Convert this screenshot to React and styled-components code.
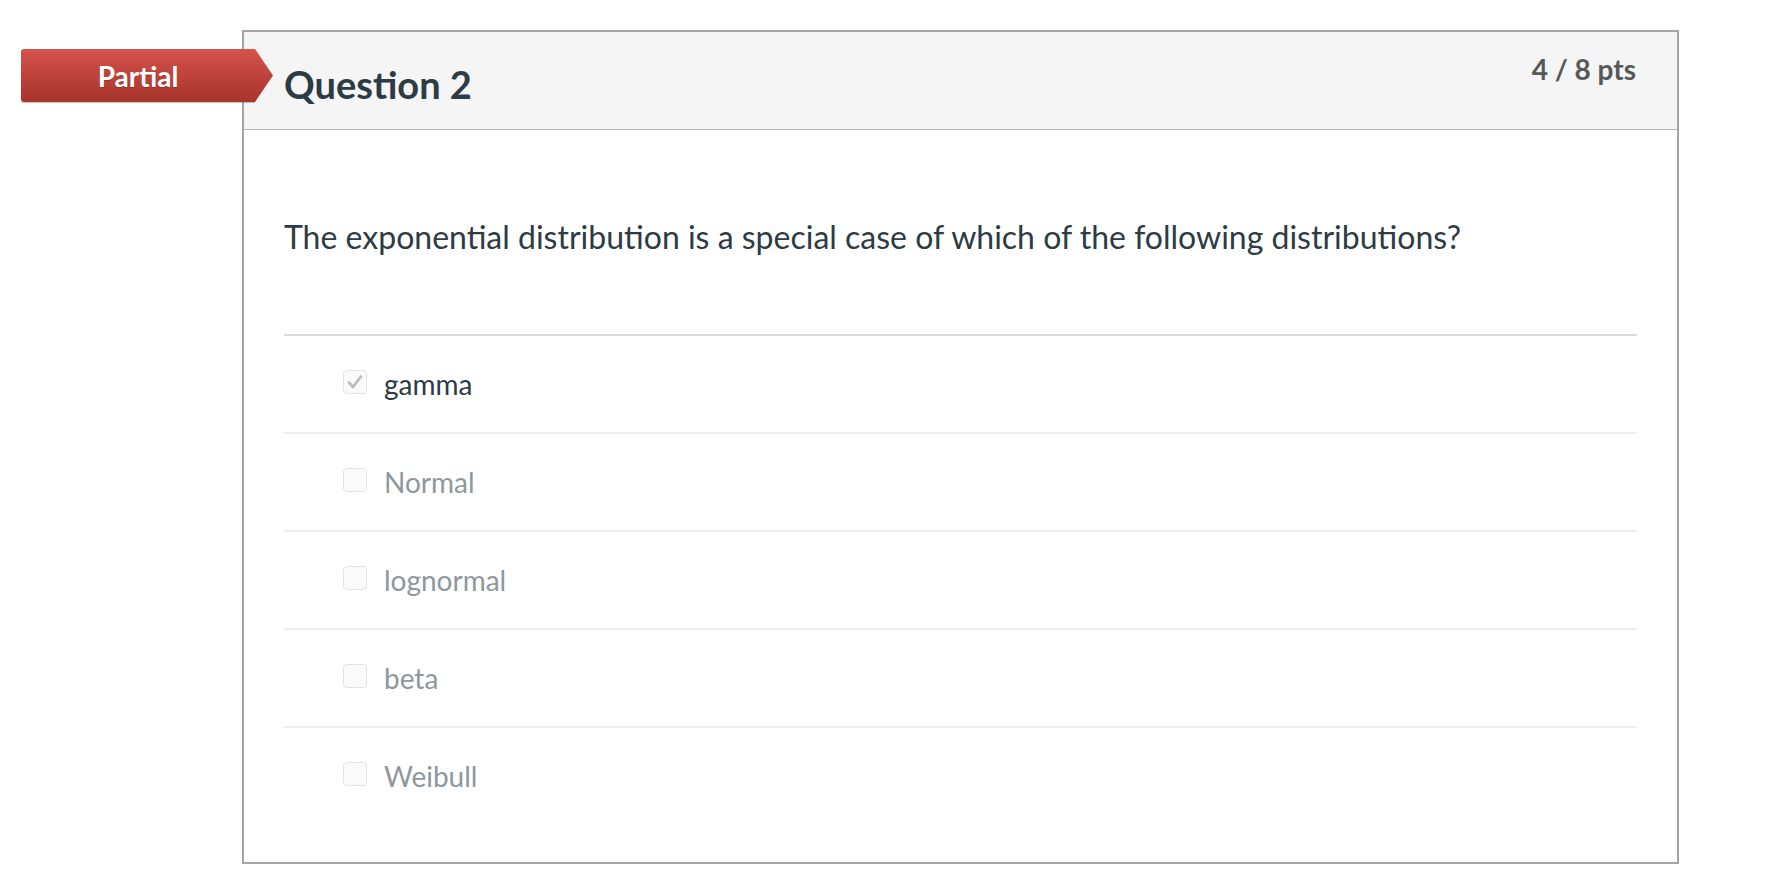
import styled, { createGlobalStyle } from 'styled-components';

const GlobalStyle = createGlobalStyle`
  html, body {
    margin: 0;
    padding: 0;
    background: #ffffff;
    font-family: Lato, "Open Sans", sans-serif;
    color: #2d3b45;
  }
`;

const Page = styled.div`
  padding: 30px 0 0 242px;
`;

const Card = styled.div`
  position: relative;
  width: 1433px;
  border: 2px solid #a5a5a5;
  background: #fff;
`;

const Badge = styled.div`
  position: absolute;
  left: -223px;
  top: 17px;
  width: 234px;
  height: 53px;
  display: flex;
  align-items: center;
  justify-content: center;
  color: #fff;
  font-size: 28px;
  font-weight: 700;
  border-radius: 3px 0 0 3px;
  background: linear-gradient(#d4534b, #a7342b);
  box-shadow: 0 1px 1px rgba(0, 0, 0, 0.25);
  text-shadow: 0 1px 1px rgba(0, 0, 0, 0.2);

  &::after {
    content: '';
    position: absolute;
    right: -18px;
    top: 0;
    width: 18px;
    height: 53px;
    background: linear-gradient(#d4534b, #a7342b);
    clip-path: polygon(0 0, 100% 50%, 0 100%);
  }
`;

const Header = styled.div`
  height: 98px;
  box-sizing: border-box;
  border-bottom: 1px solid #b5b5b5;
  background: #f5f5f5;
  padding: 0 41px 0 40px;
  display: flex;
  justify-content: space-between;
  align-items: flex-start;
`;

const Title = styled.h2`
  margin: 30px 0 0;
  font-size: 38px;
  line-height: 44px;
  font-weight: 700;
  color: #2d3b45;
`;

const Points = styled.div`
  margin-top: 20px;
  font-size: 28px;
  font-weight: 700;
  color: #585858;
`;

const Body = styled.div`
  padding: 0 40px 38px;
`;

const QuestionText = styled.p`
  margin: 0;
  padding: 85px 0 75px;
  font-size: 32px;
  line-height: 44px;
`;

const AnswerRow = styled.div`
  height: 96px;
  display: flex;
  align-items: center;
  padding-left: 59px;
  gap: 17px;
  border-top: 2px solid ${({ $first }) => ($first ? '#dadada' : '#eeeeee')};
  font-size: 28px;
  color: ${({ $selected }) => ($selected ? '#2d3b45' : '#8f979d')};
`;

const Box = styled.span`
  width: 22px;
  height: 22px;
  border: 1px solid #e2e2e2;
  border-radius: 4px;
  background: #fafafa;
  display: flex;
  align-items: center;
  justify-content: center;
  flex: none;
  margin-top: -4px;
`;

const answers = [
  { label: 'gamma', selected: true },
  { label: 'Normal' },
  { label: 'lognormal' },
  { label: 'beta' },
  { label: 'Weibull' },
];

export default function App() {
  return (
    <Page>
      <GlobalStyle />
      <Card>
        <Badge>Partial</Badge>
        <Header>
          <Title>Question 2</Title>
          <Points>4 / 8 pts</Points>
        </Header>
        <Body>
          <QuestionText>
            The exponential distribution is a special case of which of the following distributions?
          </QuestionText>
          {answers.map((a, i) => (
            <AnswerRow key={a.label} $first={i === 0} $selected={a.selected}>
              <Box>
                {a.selected && (
                  <svg width="18" height="18" viewBox="0 0 18 18">
                    <path d="M3 9.5 L7 14 L15 3.5" fill="none" stroke="#bdbdbd" strokeWidth="2.8" strokeLinecap="round" strokeLinejoin="round" />
                  </svg>
                )}
              </Box>
              {a.label}
            </AnswerRow>
          ))}
        </Body>
      </Card>
    </Page>
  );
}
